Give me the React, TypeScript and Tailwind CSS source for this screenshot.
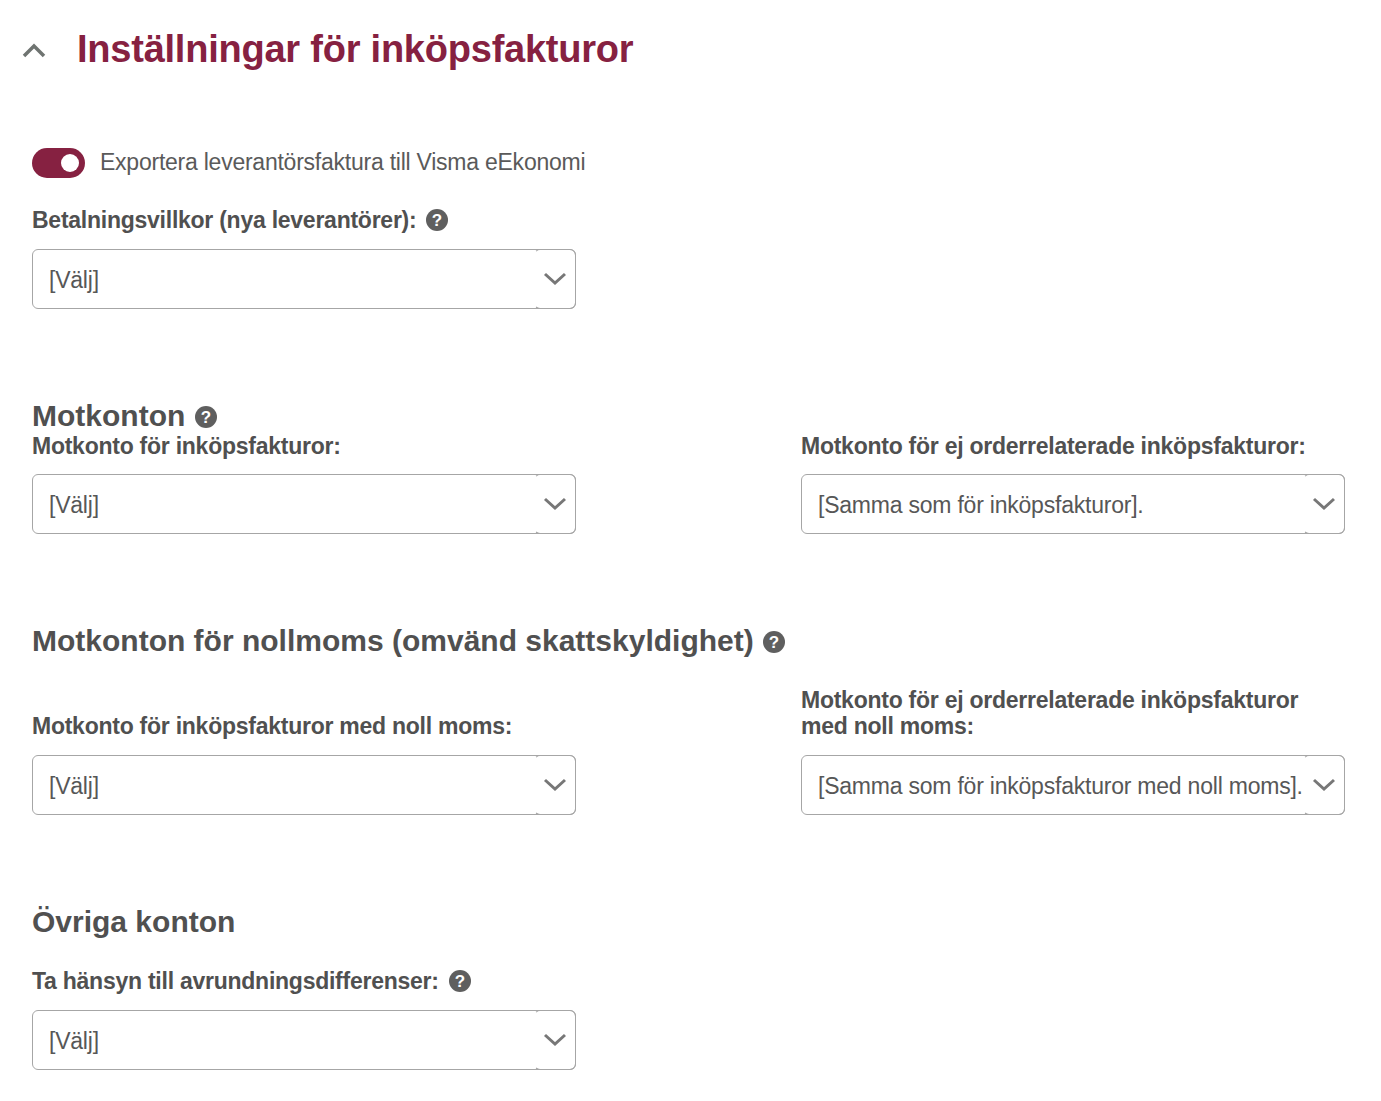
function Help({ size = 22, className = "" }: { size?: number; className?: string }) {
  return (
    <svg width={size} height={size} viewBox="0 0 22 22" className={`shrink-0 ${className}`}>
      <circle cx="11" cy="11" r="11" fill="#5f5f5f" />
      <text x="11" y="17" textAnchor="middle" fontSize="17" fontWeight="700" fill="#fff" fontFamily="Liberation Sans">?</text>
    </svg>
  );
}

function Select({ value }: { value: string }) {
  return (
    <div className="relative flex h-[60px] w-[544px] items-center rounded-[6px] border border-[#a6a6a6] bg-white pl-[16px] text-[23px] tracking-[-0.22px] text-[#575757]">
      <span className="whitespace-nowrap pt-[2px]">{value}</span>
      <div className="absolute right-[-1px] top-[-1px] flex h-[60px] w-[42px] items-center justify-center rounded-[6px] border border-[#a6a6a6] border-l-transparent">
        <svg width="24" height="14" viewBox="0 0 24 14" fill="none">
          <path d="M2 2 L12 11 L22 2" stroke="#777777" strokeWidth="3" />
        </svg>
      </div>
    </div>
  );
}

const label = "text-[23px] tracking-[-0.25px] font-bold leading-[26px] text-[#505050]";
const heading = "text-[30px] font-bold leading-[34px] text-[#505050]";

export default function App() {
  return (
    <div className="h-[1101px] w-[1381px] overflow-hidden bg-white font-['Liberation_Sans',Arial,sans-serif]">
      <div className="flex h-[99px] items-center pl-[22px]">
        <svg width="24" height="16" viewBox="0 0 24 16" fill="none">
          <path d="M2 14 L12 4 L22 14" stroke="#6f7471" strokeWidth="3.5" />
        </svg>
        <h1 className="ml-[31px] pb-[2px] text-[38px] font-bold leading-[42px] tracking-[-0.23px] text-[#862141]">Inställningar för inköpsfakturor</h1>
      </div>

      <div className="pl-[32px]">
        <div className="mt-[49px] flex h-[30px] items-center">
          <div className="flex h-[30px] w-[53px] items-center justify-end rounded-full bg-[#862141] pr-[6px]">
            <div className="h-[18px] w-[18px] rounded-full bg-white" />
          </div>
          <span className="ml-[15px] pb-[2px] text-[23px] tracking-[-0.24px] text-[#5a5a5a]">Exportera leverantörsfaktura till Visma eEkonomi</span>
        </div>

        <div className="mt-[29px] flex h-[26px] items-center gap-[10px]">
          <span className={label}>Betalningsvillkor (nya leverantörer):</span>
          <Help />
        </div>
        <div className="mt-[16px]"><Select value="[Välj]" /></div>

        <div className={`mt-[90px] flex items-center gap-[10px] ${heading}`}>
          Motkonton <Help className="translate-y-[1px]" />
        </div>
        <div className="mt-0 grid w-[1313px] grid-cols-[544px_544px] gap-x-[225px]">
          <div>
            <div className={label}>Motkonto för inköpsfakturor:</div>
            <div className="mt-[15px]"><Select value="[Välj]" /></div>
          </div>
          <div>
            <div className={label}>Motkonto för ej orderrelaterade inköpsfakturor:</div>
            <div className="mt-[15px]"><Select value="[Samma som för inköpsfakturor]." /></div>
          </div>
        </div>

        <div className={`mt-[90px] flex items-center gap-[9px] ${heading}`}>
          Motkonton för nollmoms (omvänd skattskyldighet) <Help className="translate-y-[1px]" />
        </div>
        <div className="mt-[29px] grid w-[1313px] grid-cols-[544px_544px] gap-x-[225px]">
          <div className="flex flex-col justify-end">
            <div className={label}>Motkonto för inköpsfakturor med noll moms:</div>
            <div className="mt-[16px]"><Select value="[Välj]" /></div>
          </div>
          <div>
            <div className={label}>Motkonto för ej orderrelaterade inköpsfakturor med noll moms:</div>
            <div className="mt-[16px]"><Select value="[Samma som för inköpsfakturor med noll moms]." /></div>
          </div>
        </div>

        <div className={`mt-[90px] ${heading}`}>Övriga konton</div>
        <div className="mt-[29px] flex h-[26px] items-center gap-[10px]">
          <span className={label}>Ta hänsyn till avrundningsdifferenser:</span>
          <Help />
        </div>
        <div className="mt-[16px]"><Select value="[Välj]" /></div>
      </div>
    </div>
  );
}
